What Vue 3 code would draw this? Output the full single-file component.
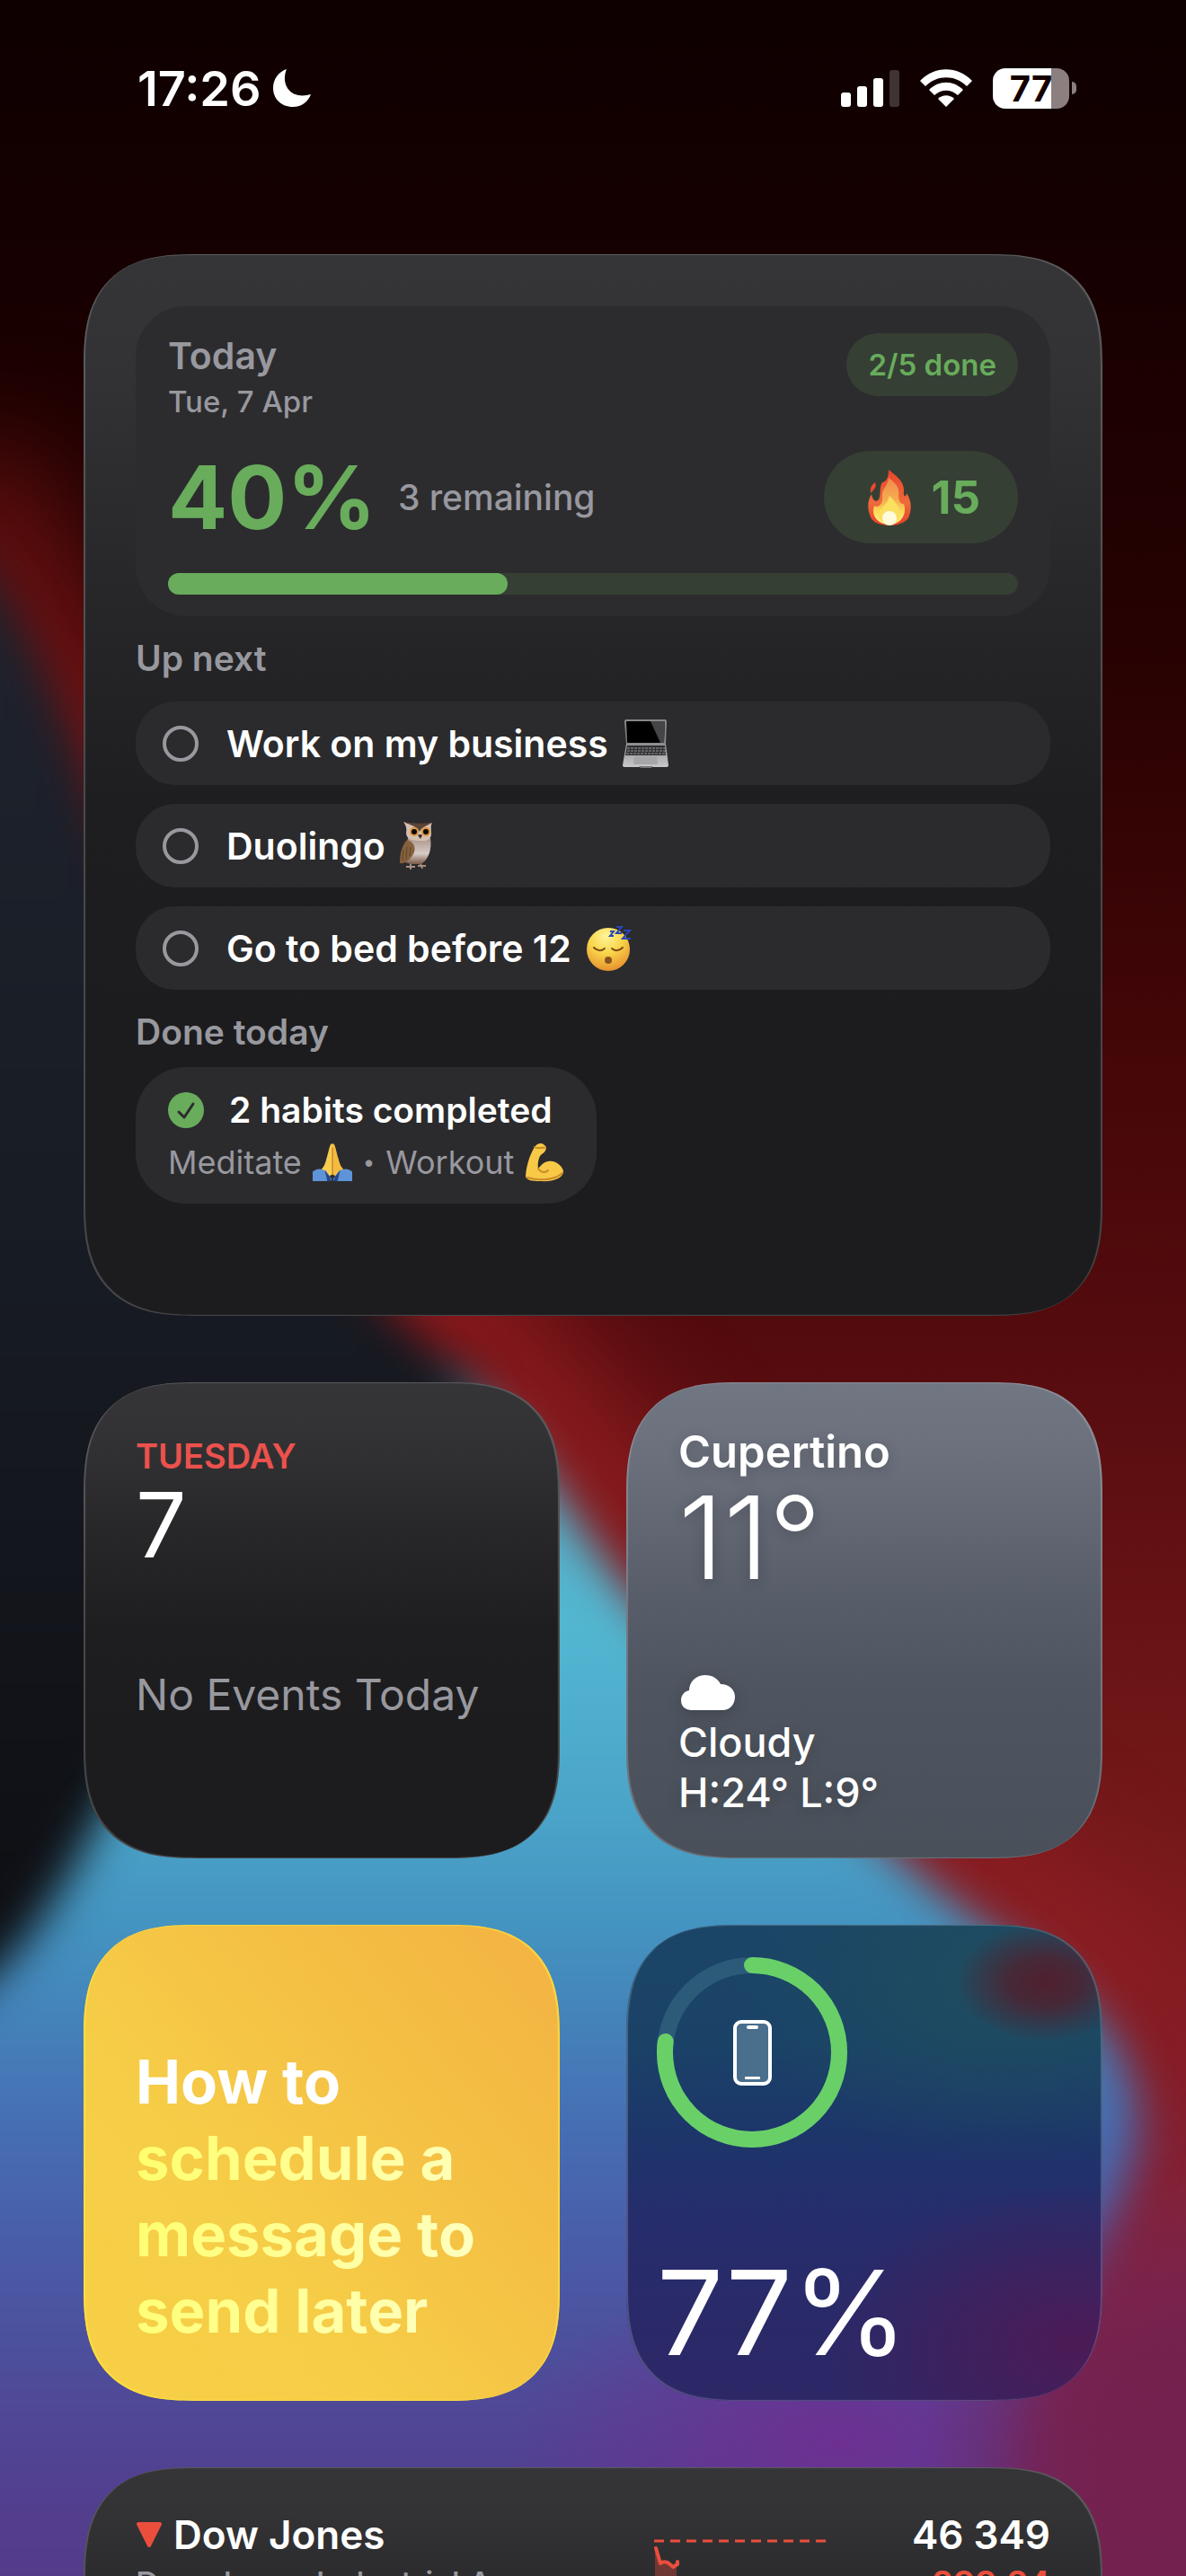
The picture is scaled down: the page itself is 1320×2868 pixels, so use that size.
<template>
    <div class="screen">
        <svg class="wallpaper" viewBox="0 0 1320 2868" preserveAspectRatio="none" aria-hidden="true">
            <defs>
                <linearGradient id="wp-red" x1="0" y1="0" x2="0" y2="1">
                    <stop offset="0" stop-color="#0e0000" />
                    <stop offset="0.1" stop-color="#160001" />
                    <stop offset="0.25" stop-color="#270202" />
                    <stop offset="0.4" stop-color="#430607" />
                    <stop offset="0.53" stop-color="#560c0f" />
                    <stop offset="0.7" stop-color="#741819" />
                    <stop offset="0.8" stop-color="#851d27" />
                    <stop offset="0.9" stop-color="#822648" />
                    <stop offset="1" stop-color="#702150" />
                </linearGradient>
                <linearGradient id="wp-dark" x1="0" y1="0" x2="0" y2="1">
                    <stop offset="0" stop-color="#20242f" />
                    <stop offset="0.5" stop-color="#171b23" />
                    <stop offset="1" stop-color="#0d0d11" />
                </linearGradient>
                <linearGradient id="wp-edge" x1="0" y1="480" x2="0" y2="2260" gradientUnits="userSpaceOnUse">
                    <stop offset="0" stop-color="#5a0d0d" />
                    <stop offset="0.3" stop-color="#8a191b" />
                    <stop offset="1" stop-color="#8c1e24" />
                </linearGradient>
                <linearGradient id="wp-blue" x1="0" y1="1530" x2="0" y2="2900" gradientUnits="userSpaceOnUse">
                    <stop offset="0" stop-color="#5a9fb8" />
                    <stop offset="0.2" stop-color="#53b7d1" />
                    <stop offset="0.36" stop-color="#4aa3c8" />
                    <stop offset="0.46" stop-color="#4391bf" />
                    <stop offset="0.62" stop-color="#466cb2" />
                    <stop offset="0.76" stop-color="#4b54a0" />
                    <stop offset="0.9" stop-color="#523f90" />
                    <stop offset="1" stop-color="#543a88" />
                </linearGradient>
                <radialGradient id="wp-purple">
                    <stop offset="0" stop-color="#6d3092" />
                    <stop offset="1" stop-color="#6d3092" stop-opacity="0" />
                </radialGradient>
                <radialGradient id="wp-magenta">
                    <stop offset="0" stop-color="#74214f" />
                    <stop offset="0.4" stop-color="#74214f" stop-opacity="0.9" />
                    <stop offset="1" stop-color="#74214f" stop-opacity="0" />
                </radialGradient>
                <filter id="wp-soft" x="-30%" y="-30%" width="160%" height="160%"
                    color-interpolation-filters="sRGB">
                    <feGaussianBlur stdDeviation="24" />
                </filter>
                <filter id="wp-softer" x="-50%" y="-50%" width="200%" height="200%"
                    color-interpolation-filters="sRGB">
                    <feGaussianBlur stdDeviation="60" />
                </filter>
            </defs>
            <rect width="1320" height="2868" fill="url(#wp-red)" />
            <path d="M-60 520C60 720 130 1000 470 1440C620 1580 700 1760 1040 2080L1280 2260" fill="none"
                stroke="url(#wp-edge)" stroke-width="170" filter="url(#wp-softer)" />
            <path d="M-100 3000V2100L490 1530C590 1570 650 1740 760 1840C880 1950 980 2060 1090 2140C1180 2200 1280 2270 1265 2390C1240 2480 1200 2580 1140 2680L1100 3000Z"
                fill="url(#wp-blue)" filter="url(#wp-soft)" />
            <ellipse cx="930" cy="2720" rx="360" ry="200" fill="url(#wp-purple)" />
            <ellipse cx="1340" cy="2720" rx="320" ry="290" fill="url(#wp-magenta)" />
            <path d="M-100 560C-10 600 50 740 95 860C170 1080 300 1390 540 1545C420 1700 260 1780 150 1960C80 2070 40 2200 -100 2260Z"
                fill="url(#wp-dark)" filter="url(#wp-soft)" />
        </svg>

        <header class="status-bar">
            <div class="status-left">
                <time>17:26</time>
                <svg class="moon" viewBox="0 0 42 42" aria-label="Focus">
                    <path d="M15 0C10 12 14 26 28 29C33 30 38 29 42 28C39 36 32 42 22 42C9 42 0 33 0 21C0 11 6 3 15 0Z"
                        fill="#fff" />
                </svg>
            </div>
            <div class="status-right">
                <svg class="signal" viewBox="0 0 65 41" aria-label="Signal">
                    <rect x="0" y="25" width="11" height="16" rx="3" fill="#fff" />
                    <rect x="18" y="18" width="11" height="23" rx="3" fill="#fff" />
                    <rect x="36" y="9" width="11" height="32" rx="3" fill="#fff" />
                    <rect x="54" y="0" width="11" height="41" rx="3" fill="#fff" opacity="0.2" />
                </svg>
                <svg class="wifi" viewBox="0 0 58 42" aria-label="Wi-Fi">
                    <path d="M0 13C16-4 42-4 58 13L52 19C39 6 19 6 6 19Z" fill="#fff" />
                    <path d="M10 23C21 12 37 12 48 23L42 29C34 22 24 22 16 29Z" fill="#fff" />
                    <path d="M20 33C25 28 33 28 38 33L29 42Z" fill="#fff" />
                </svg>
                <div class="battery">
                    <div class="battery-body" :style="{ '--level': `${battery}%` }">{{ battery }}</div>
                    <div class="battery-cap"></div>
                </div>
            </div>
        </header>

        <main class="widgets">
            <section class="widget dark habits">
                <div class="summary">
                    <div class="summary-head">
                        <div>
                            <h2 class="summary-title">Today</h2>
                            <p class="summary-date">Tue, 7 Apr</p>
                        </div>
                        <span class="pill">2/5 done</span>
                    </div>
                    <div class="summary-main">
                        <strong class="percent">{{ progress }}%</strong>
                        <span class="remaining">3 remaining</span>
                        <span class="streak">
                            <svg class="flame" viewBox="0 0 48 62" aria-label="Streak">
                                <defs>
                                    <linearGradient id="fl-out" x1="0" y1="0" x2="0" y2="1">
                                        <stop offset="0" stop-color="#e9452c" />
                                        <stop offset="0.6" stop-color="#ef6a3c" />
                                        <stop offset="1" stop-color="#e8402a" />
                                    </linearGradient>
                                    <linearGradient id="fl-in" x1="0" y1="0" x2="0" y2="1">
                                        <stop offset="0" stop-color="#f08a4b" />
                                        <stop offset="0.5" stop-color="#f5b04f" />
                                        <stop offset="0.75" stop-color="#fbe05a" />
                                        <stop offset="1" stop-color="#fdf3a0" />
                                    </linearGradient>
                                </defs>
                                <path d="M23 0C32 7 41 14 40 24C39 29 42 32 43 26C48 33 49 43 46 51C45 57 36 62 24 62C11 62 3 57 2 50C-1 43 0 33 4 27C5 34 9 37 12 33C15 28 12 20 16 14C21 13 23 8 23 0Z"
                                    fill="url(#fl-out)" />
                                <path d="M8 14C10 19 7 22 3 26C2 20 4 17 8 14Z" fill="#e9482d" />
                                <path d="M23 9C30 14 36 20 34 29C34 36 38 39 40 38C44 50 36 61 24 61C12 61 3 52 7 40C12 43 17 38 16 30C15 21 22 19 23 9Z"
                                    fill="url(#fl-in)" />
                                <path d="M24 29C31 36 37 43 36 51C35 58 30 61 24 61C17 61 12 57 12 50C13 43 21 40 24 29Z"
                                    fill="#fbdf5f" />
                                <ellipse cx="24" cy="54" rx="8" ry="8" fill="#fffbdc" />
                            </svg>
                            15
                        </span>
                    </div>
                    <div class="bar" role="progressbar" :aria-valuenow="progress" aria-label="Progress">
                        <div class="bar-fill" :style="{ width: `${progress}%` }"></div>
                    </div>
                </div>

                <h3 class="section-title">Up next</h3>
                <ul class="tasks">
                    <li v-for="task in tasks" :key="task.id">
                        <label class="task">
                            <input v-model="task.done" type="checkbox" class="task-check">
                            <span>{{ task.name }}</span>
                            <svg v-if="task.icon === 'laptop'" class="emoji" viewBox="0 0 52 54">
                                <defs>
                                    <linearGradient id="lp-base" x1="0" y1="0" x2="0" y2="1">
                                        <stop offset="0" stop-color="#8f8f91" />
                                        <stop offset="1" stop-color="#c9c9ca" />
                                    </linearGradient>
                                </defs>
                                <path d="M4 0H47Q49 0 49 2L48 28H4L2 2Q2 0 4 0Z" fill="#88888a" />
                                <path d="M4 2H47L46 26H5Z" fill="#000" />
                                <path d="M31 2H47L46 26H42Z" fill="#454547" />
                                <path d="M4 27H48L51 51Q51 53 49 53H2Q0 53 0 51Z" fill="url(#lp-base)" />
                                <path d="M5 29H47L48 40H3Z" fill="#303032" />
                                <path d="M5 32H47M5 35H48M4 38H48" stroke="#98989a" stroke-width="1"
                                    stroke-dasharray="3 1" />
                                <path d="M13 41H38L39 50H12Z" fill="#a6a6a8" />
                                <path d="M18 52H34L32 54H20Z" fill="#77777a" />
                            </svg>
                            <svg v-else-if="task.icon === 'owl'" class="emoji owl" viewBox="0 0 36 54">
                                <defs>
                                    <linearGradient id="owl-belly" x1="0" y1="0" x2="0" y2="1">
                                        <stop offset="0" stop-color="#aa968a" />
                                        <stop offset="0.6" stop-color="#d6cbc6" />
                                        <stop offset="1" stop-color="#7b5a48" />
                                    </linearGradient>
                                </defs>
                                <path d="M7 50H17M12 45V53M20 49H29M22 44L25 52" stroke="#a78f80" stroke-width="2"
                                    fill="none" />
                                <path d="M9 18C8 26 3 34 3 44L12 47H24C32 42 36 30 34 18Z" fill="url(#owl-belly)" />
                                <path d="M8 20C1 28 0 38 0 46C5 47 11 43 15 36C18 30 17 23 8 20Z" fill="#85603c" />
                                <path d="M4 31L3 43M8 28L7 42M12 28L11 38" stroke="#61432b" stroke-width="1" />
                                <path d="M4 0C14 3 25 4 36 1C34 4 35 8 35 13C35 21 28 22 21 21C13 21 7 19 7 12C8 8 7 4 4 0Z"
                                    fill="#d5bfaf" />
                                <path d="M4 0C13 4 19 5 22 11C25 5 31 4 36 1C30 2 14 2 4 0Z" fill="#5b4235" />
                                <circle cx="16" cy="11" r="5" fill="#d9943d" />
                                <circle cx="29" cy="11" r="5" fill="#d9943d" />
                                <circle cx="16" cy="11" r="3" fill="#0b0908" />
                                <circle cx="29" cy="11" r="3" fill="#0b0908" />
                                <path d="M20 15Q23 13 25 15L23 19Z" fill="#3c2b26" />
                            </svg>
                            <svg v-else class="emoji" viewBox="0 0 52 52">
                                <defs>
                                    <radialGradient id="face" cx="0.45" cy="0.2" r="0.85">
                                        <stop offset="0" stop-color="#fdf59a" />
                                        <stop offset="0.45" stop-color="#f9d64b" />
                                        <stop offset="1" stop-color="#e58a2c" />
                                    </radialGradient>
                                </defs>
                                <circle cx="25" cy="27" r="24" fill="url(#face)" />
                                <path d="M9 25Q15 31 21 26M29 26Q35 31 41 25" fill="none" stroke="#7d4a17"
                                    stroke-width="2" stroke-linecap="round" />
                                <circle cx="25" cy="39" r="4" fill="#8a5220" />
                                <path d="M27 7H31L27 12H31M34 2H40L34 9H40M42 6H49L41 15H50" fill="none"
                                    stroke="#2747b8" stroke-width="2" />
                            </svg>
                        </label>
                    </li>
                </ul>

                <h3 class="section-title">Done today</h3>
                <div class="done-chip">
                    <div class="done-count">
                        <svg class="done-check" viewBox="0 0 40 40" aria-hidden="true">
                            <circle cx="20" cy="20" r="20" fill="#68ac5c" />
                            <path d="M12 22L18 28L28 13" fill="none" stroke="#2b2b2d" stroke-width="3"
                                stroke-linecap="round" stroke-linejoin="round" />
                        </svg>
                        2 habits completed
                    </div>
                    <div class="done-list">
                        <span>Meditate</span>
                        <svg class="emoji-small" viewBox="0 0 46 44">
                            <path d="M21 1C23-1 24 2 23 8V36L12 42L5 34C12 30 14 26 16 18C18 12 19 5 21 1Z"
                                fill="#f8cc51" />
                            <path d="M25 1C23-1 22 2 23 8V36L34 42L41 34C34 30 32 26 30 18C28 12 27 5 25 1Z"
                                fill="#f5bb41" />
                            <path d="M23 5V36" stroke="#a9701e" stroke-width="1" />
                            <path d="M0 33C5 29 9 29 15 32L22 41V44H0Z" fill="#5f93d8" />
                            <path d="M46 33C41 29 37 29 31 32L24 41V44H46Z" fill="#5f93d8" />
                            <path d="M14 31L20 39L22 44H17ZM32 31L26 39L24 44H29Z" fill="#24478a" />
                        </svg>
                        <span class="dot">•</span>
                        <span>Workout</span>
                        <svg class="emoji-small" viewBox="0 0 44 44">
                            <path d="M11 5C14 0 20 0 22 3C26 5 23 11 19 13C16 15 14 22 15 29C18 26 20 22 26 21C34 19 42 26 43 32C43 40 31 44 17 43C8 43 1 42 1 37C2 26 5 15 11 5Z"
                                fill="#f8c847" />
                            <path d="M11 5C16 8 18 5 22 6M15 29C19 35 24 33 26 31M3 39C16 43 34 42 42 34" fill="none"
                                stroke="#c98a27" stroke-width="2" stroke-linecap="round" />
                        </svg>
                    </div>
                </div>
            </section>

            <section class="widget dark calendar">
                <p class="weekday">TUESDAY</p>
                <p class="day">7</p>
                <p class="no-events">No Events Today</p>
            </section>

            <section class="widget weather">
                <h2 class="city">Cupertino</h2>
                <p class="temp">11°</p>
                <div class="conditions">
                    <svg class="cloud" viewBox="0 0 60 39" aria-hidden="true">
                        <path d="M12 39C5 39 0 35 0 28C0 22 4 18 9 17C9 7 17 0 27 0C35 0 41 4 44 10C53 10 60 16 60 24C60 33 54 39 46 39Z"
                            fill="#fff" />
                    </svg>
                    <p>Cloudy</p>
                    <p>H:24° L:9°</p>
                </div>
            </section>

            <section class="widget tip">
                <p>How to <span>schedule a message to send later</span></p>
            </section>

            <section class="widget batteries">
                <svg class="ring" viewBox="0 0 213 213" aria-hidden="true">
                    <circle cx="106" cy="106" r="97" fill="none" stroke="#2c5b79" stroke-width="18" />
                    <circle cx="106" cy="106" r="97" fill="none" stroke="#69d068" stroke-width="18"
                        stroke-linecap="round" pathLength="100" :stroke-dasharray="`${battery} 100`"
                        transform="rotate(-90 106 106)" />
                    <rect x="87" y="72" width="39" height="69" rx="7" fill="#4a6f8d" stroke="#fff" stroke-width="4" />
                    <rect x="100" y="76" width="13" height="4" rx="2" fill="#fff" />
                    <rect x="98" y="133" width="17" height="3" rx="1" fill="#fff" />
                </svg>
                <p class="level">{{ battery }}%</p>
            </section>

            <section class="widget dark stocks">
                <div class="stock-name">
                    <h2>
                        <svg class="triangle" viewBox="0 0 30 29" aria-label="Down">
                            <path d="M3 2H27L15 26Z" fill="#eb4e3d" stroke="#eb4e3d" stroke-width="4"
                                stroke-linejoin="round" />
                        </svg>
                        Dow Jones
                    </h2>
                    <p>Dow Jones Industrial Average</p>
                </div>
                <svg class="spark" viewBox="0 0 192 80" aria-hidden="true">
                    <path d="M1 10L6 27L12 24L20 30L25 25V80H1Z" fill="#eb4e3d" opacity="0.35" />
                    <path d="M0 2H192" stroke="#eb4e3d" stroke-width="3" stroke-dasharray="11 7" />
                    <path d="M2 10L7 27C12 23 16 26 21 31L26 28V25" fill="none" stroke="#eb4e3d" stroke-width="4"
                        stroke-linecap="round" stroke-linejoin="round" />
                </svg>
                <div class="stock-value">
                    <p>46 349</p>
                    <p class="change">-299,24</p>
                </div>
            </section>
        </main>
    </div>
</template>

<script setup>
    import { ref } from 'vue'

    const battery = ref(77)
    const progress = ref(40)

    const tasks = ref([
        { id: 1, name: 'Work on my business', icon: 'laptop', done: false },
        { id: 2, name: 'Duolingo', icon: 'owl', done: false },
        { id: 3, name: 'Go to bed before 12', icon: 'sleep', done: false }
    ])
</script>

<style>
    body {
        margin: 0;
        background: #0e0000;
    }
</style>

<style scoped>
    .screen {
        position: relative;
        height: 100vh;
        overflow: hidden;
        color: #ffffff;
        font-family: 'Inter', 'Roboto', sans-serif;
    }

    .wallpaper {
        position: absolute;
        inset: 0;
        width: 100%;
        height: 100%;
    }

    h2,
    h3,
    p,
    ul {
        margin: 0;
        padding: 0;
        list-style: none;
    }

    svg {
        display: block;
        flex: none;
    }

    /* Status bar */
    .status-bar {
        position: relative;
        display: flex;
        justify-content: space-between;
        align-items: center;
        height: 196px;
        padding: 0 122px 0 153px;
    }

    .status-left {
        display: flex;
        align-items: center;
        gap: 13px;
        font-size: 54px;
        font-weight: 600;
    }

    .moon {
        width: 42px;
        height: 42px;
    }

    .status-right {
        display: flex;
        align-items: center;
        gap: 23px;
    }

    .signal {
        width: 65px;
        height: 41px;
    }

    .wifi {
        width: 58px;
        height: 42px;
    }

    .battery {
        display: flex;
        align-items: center;
        gap: 3px;
    }

    .battery-body {
        box-sizing: border-box;
        width: 85px;
        height: 45px;
        border-radius: 14px;
        background: linear-gradient(90deg, #ffffff var(--level), #8b7f80 var(--level));
        color: #150000;
        font-size: 40px;
        font-weight: 700;
        line-height: 45px;
        text-align: center;
    }

    .battery-cap {
        width: 5px;
        height: 14px;
        border-radius: 0 5px 5px 0;
        background: #8b7f80;
    }

    /* Widget grid */
    .widgets {
        position: relative;
        display: grid;
        grid-template-columns: 1fr 1fr;
        gap: 74px;
        padding: 87px 93px 0;
    }

    .widget {
        box-sizing: border-box;
        display: flex;
        flex-direction: column;
        aspect-ratio: 1;
        padding: 58px;
        border-radius: 92px;
        overflow: hidden;
        box-shadow: inset 2px -1px 1px rgba(255, 255, 255, 0.2), inset -2px 1px 1px rgba(255, 255, 255, 0.2);
    }

    @supports (corner-shape: superellipse(1.3)) {
        .widget {
            border-radius: 124px;
            corner-shape: superellipse(1.4);
        }
    }

    .dark {
        background: linear-gradient(180deg, #353537 0%, #333335 10%, #272729 32%, #1e1e20 52%, #1c1c1e 75%);
    }

    /* Habits */
    .habits {
        grid-column: 1 / -1;
        align-items: stretch;
        aspect-ratio: 1134 / 1182;
    }

    .summary {
        padding: 30px 36px 24px;
        border-radius: 56px;
        background: #2c2c2e;
    }

    .summary-head {
        display: flex;
        justify-content: space-between;
        align-items: flex-start;
    }

    .summary-title {
        color: #98989f;
        font-size: 41px;
        font-weight: 600;
        line-height: 50px;
    }

    .summary-date {
        padding-top: 6px;
        color: #98989f;
        font-size: 33px;
        font-weight: 500;
        line-height: 40px;
    }

    .pill {
        padding: 0 24px;
        border-radius: 35px;
        background: #353f34;
        color: #68ac5c;
        font-size: 33px;
        font-weight: 600;
        line-height: 70px;
    }

    .summary-main {
        display: flex;
        align-items: center;
        padding: 35px 0 33px;
    }

    .percent {
        color: #68ac5c;
        font-size: 98px;
        font-weight: 700;
        line-height: 103px;
    }

    .remaining {
        padding-left: 24px;
        color: #98989f;
        font-size: 39px;
        font-weight: 500;
    }

    .streak {
        display: flex;
        align-items: center;
        gap: 22px;
        height: 103px;
        margin-left: auto;
        padding: 0 42px 0 49px;
        border-radius: 52px;
        background: #353f34;
        color: #68ac5c;
        font-size: 51px;
        font-weight: 700;
    }

    .flame {
        width: 48px;
        height: 62px;
    }

    .bar {
        height: 24px;
        border-radius: 12px;
        background: #353f34;
    }

    .bar-fill {
        height: 100%;
        border-radius: 12px;
        background: #68ac5c;
    }

    .section-title {
        padding: 23px 0 15px;
        color: #98989f;
        font-size: 39px;
        font-weight: 600;
        line-height: 48px;
    }

    .tasks {
        display: flex;
        flex-direction: column;
        gap: 21px;
        padding-top: 9px;
    }

    .task {
        display: flex;
        align-items: center;
        height: 93px;
        padding-left: 30px;
        border-radius: 44px;
        background: #2b2b2d;
        font-size: 41px;
        font-weight: 600;
    }

    .task-check {
        appearance: none;
        width: 40px;
        height: 40px;
        margin: 0 31px 0 0;
        border: 4px solid #98989f;
        border-radius: 50%;
    }

    .task-check:checked {
        border-color: #68ac5c;
        background: #68ac5c;
    }

    .emoji {
        width: 52px;
        height: 54px;
        margin-left: 16px;
    }

    .owl {
        width: 36px;
    }

    .done-chip {
        align-self: flex-start;
        padding: 24px 36px 22px;
        border-radius: 56px;
        background: #2b2b2d;
    }

    .done-count {
        display: flex;
        align-items: center;
        gap: 28px;
        font-size: 39px;
        font-weight: 600;
        line-height: 48px;
    }

    .done-check {
        width: 40px;
        height: 40px;
    }

    .done-list {
        display: flex;
        align-items: center;
        gap: 12px;
        padding-top: 10px;
        color: #98989f;
        font-size: 36px;
        line-height: 48px;
    }

    .dot {
        font-size: 24px;
    }

    .emoji-small {
        width: 44px;
        height: 44px;
    }

    /* Calendar */
    .weekday {
        color: #eb524d;
        font-size: 38px;
        font-weight: 600;
        line-height: 48px;
    }

    .day {
        font-size: 100px;
        font-weight: 400;
        line-height: 106px;
    }

    .no-events {
        padding-top: 106px;
        color: #98989f;
        font-size: 48px;
        line-height: 60px;
        white-space: nowrap;
    }

    /* Weather */
    .weather {
        padding: 50px 58px 45px;
        background: linear-gradient(180deg, #707682 0%, #6b707c 15%, #575d69 45%, #4f5560 65%, #49505a 100%);
        text-shadow: 0 4px 16px rgba(0, 0, 0, 0.2);
    }

    .city {
        font-size: 49px;
        font-weight: 600;
        line-height: 56px;
    }

    .temp {
        font-size: 128px;
        font-weight: 300;
        line-height: 134px;
    }

    .conditions {
        margin-top: auto;
        font-size: 45px;
        font-weight: 500;
        line-height: 56px;
    }

    .cloud {
        width: 60px;
        height: 39px;
        margin: 0 0 8px 3px;
        filter: drop-shadow(0 4px 8px rgba(0, 0, 0, 0.2));
    }

    /* Tip */
    .tip {
        justify-content: flex-end;
        background: linear-gradient(50deg, #f7d046 0%, #f6cd47 35%, #f4bc43 75%, #f3b243 100%);
        box-shadow: inset 2px -1px 1px rgba(255, 230, 60, 0.7), inset -2px 1px 1px rgba(255, 230, 60, 0.7);
        font-size: 67px;
        font-weight: 700;
        line-height: 85px;
    }

    .tip span {
        display: block;
        background: linear-gradient(105deg, #ffff70 5%, #ffffc8 95%);
        background-clip: text;
        color: transparent;
    }

    /* Batteries */
    .batteries {
        justify-content: space-between;
        padding: 36px 34px 28px;
        background:
            radial-gradient(ellipse 100px 66px at 88% 12%, #50202e 0%, #50202ecc 40%, transparent 100%),
            radial-gradient(ellipse 300px 200px at 80% 12%, #1f4d5f 0%, transparent 100%),
            radial-gradient(ellipse 280px 180px at 94% 88%, #4c1b56 0%, transparent 100%),
            linear-gradient(180deg, #1b4566 0%, #1a4267 25%, #1d356a 45%, #262d6c 62%, #2d2766 100%);
    }

    .ring {
        width: 213px;
        height: 213px;
    }

    .level {
        font-size: 131px;
        font-weight: 400;
        line-height: 140px;
    }

    /* Stocks */
    .stocks {
        grid-column: 1 / -1;
        flex-direction: row;
        aspect-ratio: 1134 / 530;
        padding-top: 48px;
        font-size: 44px;
        font-weight: 600;
        line-height: 54px;
    }

    .stock-name {
        width: 430px;
    }

    .stock-name h2 {
        display: flex;
        align-items: center;
        gap: 12px;
        font-size: 44px;
        font-weight: 600;
    }

    .stock-name p {
        overflow: hidden;
        color: #98989f;
        font-size: 36px;
        font-weight: 500;
        text-overflow: ellipsis;
        white-space: nowrap;
    }

    .triangle {
        width: 30px;
        height: 29px;
    }

    .spark {
        width: 192px;
        height: 80px;
        margin: 32px 0 0 147px;
    }

    .stock-value {
        margin-left: auto;
        text-align: right;
    }

    .change {
        color: #eb4e3d;
        font-size: 38px;
    }
</style>
